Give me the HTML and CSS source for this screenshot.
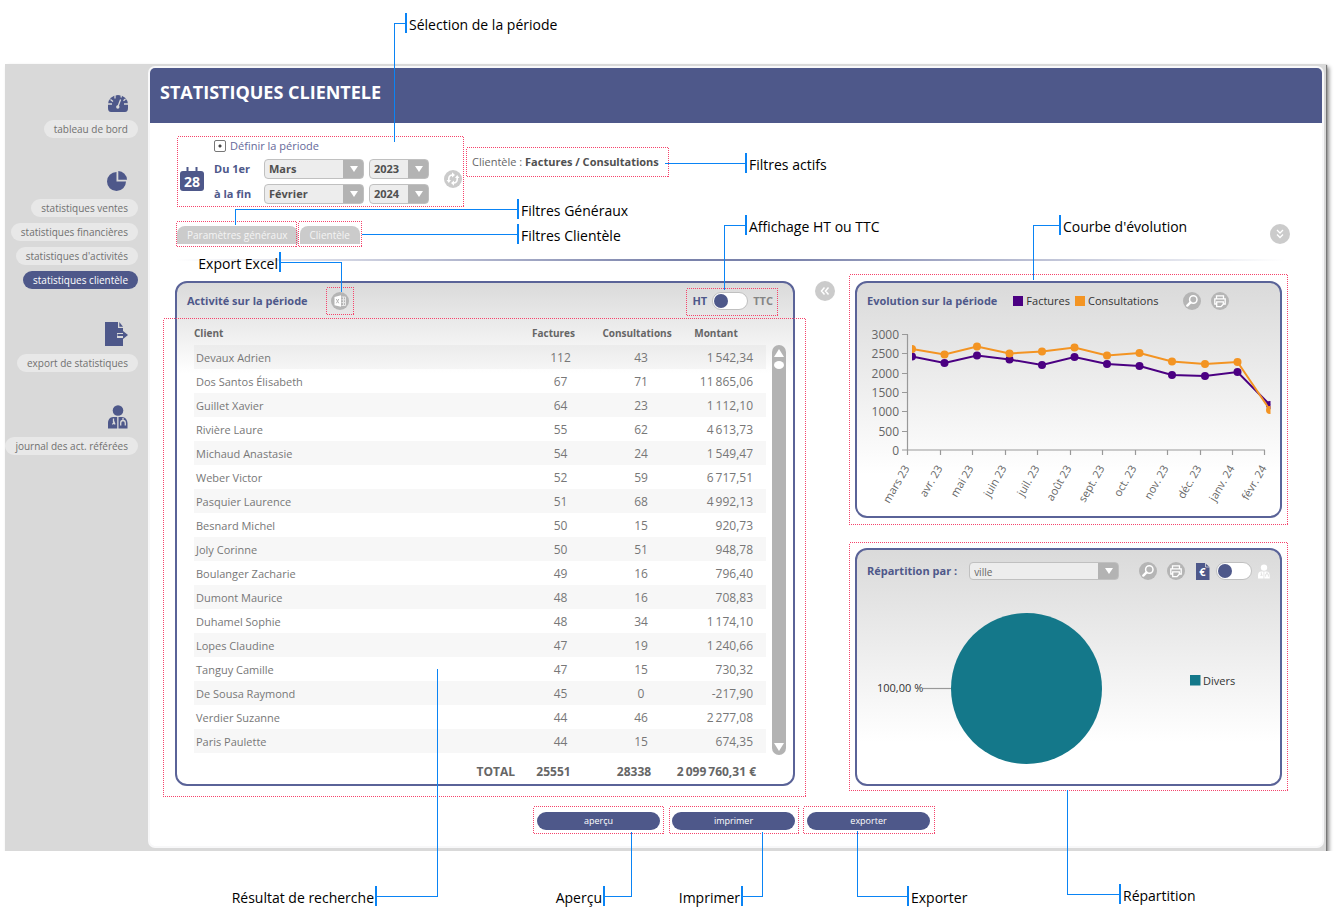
FILE: index.html
```html
<!DOCTYPE html>
<html lang="fr">
<head>
<meta charset="utf-8">
<title>Statistiques clientèle</title>
<link rel="stylesheet" href="styles.css">
</head>
<body>
<svg class="sprite" aria-hidden="true">
  <symbol id="i-zoom" viewBox="0 0 18 18"><circle cx="9" cy="9" r="9" fill="#b5b5b5"/><circle cx="10.300" cy="7.500" r="3.700" fill="none" stroke="#fff" stroke-width="1.500"/><path d="M7.500 10.400 4.300 13.600" stroke="#fff" stroke-width="2.400" stroke-linecap="round"/></symbol>
  <symbol id="i-print" viewBox="0 0 18 18"><circle cx="9" cy="9" r="9" fill="#b5b5b5"/><path d="M5.500 6.500V3.800h7v2.700M5.500 12H3.800V6.900h10.400V12h-1.700" fill="none" stroke="#fff" stroke-width="1.300"/><path d="M5.700 9.800h6.600v2.400l-2.300 2.400H5.700z" fill="#b5b5b5" stroke="#fff" stroke-width="1.300"/></symbol>
  <symbol id="i-doctor" viewBox="0 0 20 24"><circle cx="10" cy="5.500" r="5.300"/><path d="M0 23.500v-5c0-4 2-6.300 5-6.500h4.200v11.500zM10.500 23.500V12H14c3 .2 5.500 2.500 5.500 6.500v5z"/><path class="cut" d="M5.500 13.500v3.500m-1 2.500 1.500-2.500 1 2.500M12.700 20.500v-2.500a2.300 2.500 0 0 1 4.600 0v2.500M15 15.500V13" fill="none" stroke-width="1.300"/></symbol>
</svg>

<div class="frame">
  <nav class="sidebar" aria-label="Navigation">
    <div class="nav-group">
      <svg class="nav-icon" width="20" height="17" viewBox="0 0 20 17"><path d="M0 9.500A10 9.500 0 0 1 20 9.500V13q0 4-3 4H3q-3 0-3-4z" fill="#4e588a"/><path d="M9.800 12 12.600 4.500M7 0v3.500M13.200 0v2.500M0 9h4M16 9h4M2.500 4.500l2.500 2M17.500 4l-2 1.800" stroke="#d9d9d9" stroke-width="1.300"/><circle cx="9.800" cy="12" r="1.700" fill="#d9d9d9"/></svg>
      <a class="pill" href="#">tableau de bord</a>
    </div>
    <div class="nav-group">
      <svg class="nav-icon" width="21" height="20" viewBox="0 0 21 20"><path d="M9.500 1v9.500H19A9.500 9.500 0 1 1 9.500 1z" fill="#4e588a"/><path d="M11.300 0a9 9 0 0 1 8.700 8.800h-8.700z" fill="#4e588a"/></svg>
      <a class="pill" href="#">statistiques ventes</a>
      <a class="pill" href="#">statistiques financières</a>
      <a class="pill" href="#">statistiques d'activités</a>
      <a class="pill active" href="#" aria-current="page">statistiques clientèle</a>
    </div>
    <div class="nav-group">
      <svg class="nav-icon" width="24" height="24" viewBox="0 0 24 24"><path d="M1 0h13v6h5v5h-6v5h6v8H1z" fill="#4e588a"/><path d="M15.300 0 19 4.700h-3.700z" fill="#4e588a"/><path d="M13.500 12h5.500V9l5 4-5 4v-3h-5.500z" fill="#4e588a"/></svg>
      <a class="pill" href="#">export de statistiques</a>
    </div>
    <div class="nav-group">
      <svg class="nav-icon blue" width="20" height="24"><use href="#i-doctor"/></svg>
      <a class="pill" href="#">journal des act. référées</a>
    </div>
  </nav>

  <main class="main">
    <header class="title-bar"><h1>STATISTIQUES CLIENTELE</h1></header>

    <section class="filters">
      <svg class="shift" width="24" height="24" viewBox="0 0 24 24"><path d="M3 4h18q3 0 3 3v14q0 3-3 3H3q-3 0-3-3V7q0-3 3-3z" fill="#4e588a"/><path d="M7.500 0v5M16.500 0v5" stroke="#4e588a" stroke-width="2"/><text class="cal-day" x="12" y="20" text-anchor="middle">28</text></svg>
      <div class="period">
        <label class="define"><input type="radio" name="periode" checked>Définir la période</label>
        <label class="lbl" for="m1">Du 1er</label>
        <span class="select"><select id="m1"><option>Mars</option></select></span>
        <span class="select"><select aria-label="Année de début"><option>2023</option></select></span>
        <label class="lbl" for="m2">à la fin</label>
        <span class="select"><select id="m2"><option>Février</option></select></span>
        <span class="select"><select aria-label="Année de fin"><option>2024</option></select></span>
      </div>
      <button class="icon-btn refresh shift" aria-label="Actualiser"><svg width="18" height="18" viewBox="0 0 18 18"><circle cx="9" cy="9" r="9" fill="#cbcbcb"/><path d="M4.800 11V8.500Q5 5.200 8.500 5M13.200 7v2.500q-.2 3.300-3.700 3.500" fill="none" stroke="#fff" stroke-width="1.600"/><path d="M8 2.300 11 5 8 7.500zM10 10.500 7 13l3 2.700zM2.600 10h4.400l-2.200 3zM11 8h4.400l-2.200-3z" fill="#fff"/></svg></button>
      <p class="active-filter">Clientèle : <strong>Factures / Consultations</strong></p>
    </section>

    <div class="tabs">
      <button class="tab">Paramètres généraux</button>
      <button class="tab">Clientèle</button>
      <button class="icon-btn expand" aria-label="Déplier"><svg width="20" height="20" viewBox="0 0 20 20"><circle cx="10" cy="10" r="10" fill="#cbcbcb"/><path d="M7 6l3 3 3-3M7 10.500l3 3 3-3" fill="none" stroke="#fff" stroke-width="1.300"/></svg></button>
    </div>
    <hr class="divider">

    <div class="panels">
      <section class="panel activity">
        <div class="panel-head">
          <h2>Activité sur la période</h2>
          <button class="icon-btn excel" aria-label="Export Excel"><svg width="18" height="18" viewBox="0 0 18 18"><circle cx="9" cy="9" r="9" fill="#b5b5b5"/><path d="M3.500 5 10 3.300v11.500L3.500 13.300z" fill="#fff"/><path d="M10.500 5h4v8.500h-4M10.500 7.800h4M10.500 10.600h4M12.500 5v8.500" fill="none" stroke="#e8e8e8" stroke-width="1"/><path d="M5.300 7l2.500 4.300M7.800 7l-2.500 4.300" stroke="#b5b5b5"/></svg></button>
          <label class="ht">HT <input class="switch" type="checkbox"> <span>TTC</span></label>
        </div>
        <div class="table-area">
          <table>
            <colgroup><col><col class="c-fac"><col class="c-con"><col class="c-mon"></colgroup>
            <thead><tr><th>Client</th><th>Factures</th><th>Consultations</th><th>Montant</th></tr></thead>
            <tbody>
              <tr><td>Devaux Adrien</td><td>112</td><td>43</td><td>1&#8201;542,34</td></tr>
              <tr><td>Dos Santos Élisabeth</td><td>67</td><td>71</td><td>11&#8201;865,06</td></tr>
              <tr><td>Guillet Xavier</td><td>64</td><td>23</td><td>1&#8201;112,10</td></tr>
              <tr><td>Rivière Laure</td><td>55</td><td>62</td><td>4&#8201;613,73</td></tr>
              <tr><td>Michaud Anastasie</td><td>54</td><td>24</td><td>1&#8201;549,47</td></tr>
              <tr><td>Weber Victor</td><td>52</td><td>59</td><td>6&#8201;717,51</td></tr>
              <tr><td>Pasquier Laurence</td><td>51</td><td>68</td><td>4&#8201;992,13</td></tr>
              <tr><td>Besnard Michel</td><td>50</td><td>15</td><td>920,73</td></tr>
              <tr><td>Joly Corinne</td><td>50</td><td>51</td><td>948,78</td></tr>
              <tr><td>Boulanger Zacharie</td><td>49</td><td>16</td><td>796,40</td></tr>
              <tr><td>Dumont Maurice</td><td>48</td><td>16</td><td>708,83</td></tr>
              <tr><td>Duhamel Sophie</td><td>48</td><td>34</td><td>1&#8201;174,10</td></tr>
              <tr><td>Lopes Claudine</td><td>47</td><td>19</td><td>1&#8201;240,66</td></tr>
              <tr><td>Tanguy Camille</td><td>47</td><td>15</td><td>730,32</td></tr>
              <tr><td>De Sousa Raymond</td><td>45</td><td>0</td><td>-217,90</td></tr>
              <tr><td>Verdier Suzanne</td><td>44</td><td>46</td><td>2&#8201;277,08</td></tr>
              <tr><td>Paris Paulette</td><td>44</td><td>15</td><td>674,35</td></tr>
            </tbody>
            <tfoot><tr><th>TOTAL</th><td>25551</td><td>28338</td><td>2&#8201;099&#8201;760,31 €</td></tr></tfoot>
          </table>
          <div class="scrollbar" aria-hidden="true"><span class="up"></span><span class="thumb"></span><span class="down"></span></div>
        </div>
      </section>

      <button class="icon-btn collapse" aria-label="Replier"><svg width="20" height="20" viewBox="0 0 20 20"><circle cx="10" cy="10" r="10" fill="#cbcbcb"/><path d="M9.500 6.500 6.500 10l3 3.500M13.500 6.500l-3 3.500 3 3.500" fill="none" stroke="#fff" stroke-width="1.500"/></svg></button>

      <div class="side-panels">
        <section class="panel">
          <div class="panel-head">
            <h2>Evolution sur la période</h2>
            <ul class="legend"><li class="k-fac">Factures</li><li class="k-con">Consultations</li></ul>
            <button class="icon-btn" aria-label="Agrandir"><svg width="18" height="18"><use href="#i-zoom"/></svg></button>
            <button class="icon-btn print" aria-label="Imprimer"><svg width="18" height="18"><use href="#i-print"/></svg></button>
          </div>
          <svg class="chart" viewBox="857 320 423 196" role="img" aria-label="Courbe d'évolution">
            <clipPath id="plot"><path d="M912 330H1270.500V450H912z"/></clipPath>
            <path d="M907.500 334.500V450M902 334.500h6M902 353.500h6M902 373.500h6M902 392.500h6M902 411.500h6M902 431.500h6M902 450H1265M907.500 450v5M940.500 450v5M972.500 450v5M1005.500 450v5M1037.500 450v5M1070.500 450v5M1102.500 450v5M1135.500 450v5M1167.500 450v5M1200.500 450v5M1232.500 450v5M1264.500 450v5" fill="none" stroke="#999" stroke-width="1.200"/>
            <g class="axis" text-anchor="end">
              <text x="899" y="339">3000</text><text x="899" y="358">2500</text><text x="899" y="378">2000</text><text x="899" y="397">1500</text><text x="899" y="416">1000</text><text x="899" y="436">500</text><text x="899" y="455">0</text>
            </g>
            <g class="axis months" text-anchor="end">
              <text transform="translate(910 468) rotate(-60)">mars 23</text><text transform="translate(943 468) rotate(-60)">avr. 23</text><text transform="translate(974 468) rotate(-60)">mai 23</text><text transform="translate(1007 468) rotate(-60)">juin 23</text><text transform="translate(1040 468) rotate(-60)">juil. 23</text><text transform="translate(1072 468) rotate(-60)">août 23</text><text transform="translate(1105 468) rotate(-60)">sept. 23</text><text transform="translate(1137 468) rotate(-60)">oct. 23</text><text transform="translate(1169 468) rotate(-60)">nov. 23</text><text transform="translate(1202 468) rotate(-60)">déc. 23</text><text transform="translate(1235 468) rotate(-60)">janv. 24</text><text transform="translate(1267 468) rotate(-60)">févr. 24</text>
            </g>
            <g clip-path="url(#plot)">
              <polyline points="912,356.500 944.500,363 977,355.500 1009.500,359.500 1042,365 1074.500,357 1107,364 1139.500,366 1172,375 1205,376 1237.500,372 1270,405" fill="none" stroke="#4b0082" stroke-width="2"/>
              <g fill="#4b0082"><circle cx="912" cy="356.500" r="4"/><circle cx="944.500" cy="363" r="4"/><circle cx="977" cy="355.500" r="4"/><circle cx="1009.500" cy="359.500" r="4"/><circle cx="1042" cy="365" r="4"/><circle cx="1074.500" cy="357" r="4"/><circle cx="1107" cy="364" r="4"/><circle cx="1139.500" cy="366" r="4"/><circle cx="1172" cy="375" r="4"/><circle cx="1205" cy="376" r="4"/><circle cx="1237.500" cy="372" r="4"/><circle cx="1270" cy="405" r="4"/></g>
              <polyline points="912,349 944.500,354.500 977,346.500 1009.500,353.500 1042,351.500 1074.500,347.500 1107,355.500 1139.500,353 1172,361.500 1205,364 1237.500,362 1270,410" fill="none" stroke="#f39423" stroke-width="2"/>
              <g fill="#f39423"><circle cx="912" cy="349" r="4"/><circle cx="944.500" cy="354.500" r="4"/><circle cx="977" cy="346.500" r="4"/><circle cx="1009.500" cy="353.500" r="4"/><circle cx="1042" cy="351.500" r="4"/><circle cx="1074.500" cy="347.500" r="4"/><circle cx="1107" cy="355.500" r="4"/><circle cx="1139.500" cy="353" r="4"/><circle cx="1172" cy="361.500" r="4"/><circle cx="1205" cy="364" r="4"/><circle cx="1237.500" cy="362" r="4"/><circle cx="1270" cy="410" r="4"/></g>
            </g>
          </svg>
        </section>

        <section class="panel">
          <div class="panel-head tall">
            <label class="h2" for="rep">Répartition par :</label>
            <span class="select city"><select id="rep"><option>ville</option></select></span>
            <button class="icon-btn" aria-label="Agrandir"><svg width="18" height="18"><use href="#i-zoom"/></svg></button>
            <button class="icon-btn" aria-label="Imprimer"><svg width="18" height="18"><use href="#i-print"/></svg></button>
            <div class="mode">
              <svg width="14" height="17" viewBox="0 0 14 17"><path d="M0 0h9l4.500 4v13H0z" fill="#4e588a"/><path d="M9.500 0v4H14" fill="none" stroke="#dedede" stroke-width=".8"/><text class="euro" x="6.500" y="13" text-anchor="middle">€</text></svg>
              <input class="switch" type="checkbox" aria-label="Montant ou clients">
              <svg class="white" width="12" height="15"><use href="#i-doctor"/></svg>
            </div>
          </div>
          <svg class="chart" viewBox="857 592 423 192" role="img" aria-label="Répartition par ville">
            <path d="M923 688.500h29" stroke="#999" stroke-width="1.200"/>
            <circle cx="1026.500" cy="688.500" r="75.500" fill="#14788a"/>
            <text class="pie-label" x="877" y="692">100,00 %</text>
            <path d="M1190 675h10.500v10.500H1190z" fill="#14788a"/>
            <text class="pie-label" x="1203" y="685">Divers</text>
          </svg>
        </section>
      </div>
    </div>

    <div class="actions">
      <button class="action">aperçu</button>
      <button class="action">imprimer</button>
      <button class="action">exporter</button>
    </div>
  </main>
</div>

<svg class="callouts" width="1335" height="924" viewBox="0 0 1335 924">
  <g class="zones">
    <rect x="177.500" y="136.500" width="286" height="70"/><rect x="466.500" y="147.500" width="202" height="29"/>
    <rect x="176.500" y="221.500" width="120" height="25"/><rect x="298.500" y="221.500" width="63" height="25"/>
    <rect x="326.500" y="287.500" width="27" height="27"/><rect x="686.500" y="288.500" width="91" height="27"/>
    <rect x="163.500" y="318.500" width="642" height="478"/><rect x="849.500" y="274.500" width="438" height="250"/><rect x="849.500" y="542.500" width="438" height="248"/>
    <rect x="533.500" y="806.500" width="130" height="27"/><rect x="669.500" y="806.500" width="129" height="27"/><rect x="803.500" y="806.500" width="131" height="27"/>
  </g>
  <g class="leaders">
    <path d="M405 23.500H394.500V142"/><path d="M665 163.500H745"/><path d="M517 209.500H235.500V225"/><path d="M362 234.500H517"/><path d="M745 225.500H724.500V290"/><path d="M281 262.500H341.500V292"/><path d="M1059 225.500H1033.500V280"/>
    <path d="M377 896.500H437.500V669"/><path d="M605 896.500H631.500V832"/><path d="M743 896.500H762.500V832"/><path d="M907 896.500H857.500V831"/><path d="M1119 894.500H1067.500V790"/>
  </g>
  <path class="bars" d="M406 13v20M746 153v20M518 199v20M518 224v20M746 215v20M280 252v20M1060 215v20M376 886v20M604 886v20M742 886v20M908 886v20M1120 884v20"/>
  <g class="notes">
    <text x="409" y="30">Sélection de la période</text><text x="749" y="170">Filtres actifs</text><text x="521" y="216">Filtres Généraux</text><text x="521" y="241">Filtres Clientèle</text><text x="749" y="232">Affichage HT ou TTC</text><text x="1063" y="232">Courbe d'évolution</text><text x="911" y="903">Exporter</text><text x="1123" y="901">Répartition</text>
    <g text-anchor="end"><text x="278" y="269">Export Excel</text><text x="374" y="903">Résultat de recherche</text><text x="602" y="903">Aperçu</text><text x="740" y="903">Imprimer</text></g>
  </g>
</svg>
</body>
</html>
```
FILE: styles.css
```css
:root {
  --blue: #4e588a;
  --grey: #d9d9d9;
}
* { box-sizing: border-box; }
body {
  margin: 0;
  background: #fff;
  color: #666;
  font: 12px/18px "Open Sans", "Noto Sans", sans-serif;
}
button, select, input { font: inherit; color: inherit; margin: 0; }
button { border: 0; padding: 0; background: none; cursor: pointer; }
svg { display: block; flex: none; }
h1, h2, p, ul { margin: 0; padding: 0; }
.sprite { position: absolute; width: 0; height: 0; }

.frame {
  display: flex;
  margin: 64px 9px 0 5px;
  padding: 2px 2px 3px 0;
  background: var(--grey);
  box-shadow: 1px 1px 1px #777, 3px 3px 4px #888;
}

/* Sidebar */
.sidebar {
  display: flex;
  flex-direction: column;
  gap: 33px;
  width: 143px;
  flex: none;
  padding: 29px 10px 0 0;
}
.nav-group { display: flex; flex-direction: column; align-items: flex-end; gap: 6px; }
.nav-icon { margin: 0 10px 2px 0; }
.blue { fill: var(--blue); }
.cut { stroke: var(--grey); }
.white { fill: #fff; }
.pill {
  height: 18px;
  padding: 0 10px;
  border-radius: 9px;
  background: #e8e8e8;
  color: #707070;
  font-size: 10px;
  line-height: 18px;
  text-decoration: none;
  white-space: nowrap;
}
.pill.active { background: var(--blue); color: #fff; }

/* Main area */
.main {
  flex: 1;
  min-width: 0;
  padding-bottom: 16px;
  border: 2px solid #f8f8f9;
  border-radius: 7px;
  background: #fff;
}
.title-bar {
  height: 55px;
  padding: 0 10px;
  border-radius: 5px 5px 0 0;
  background: var(--blue);
}
.title-bar h1 { color: #fff; font-size: 18px; font-weight: 700; line-height: 48px; }

.filters { display: flex; align-items: center; padding: 15px 30px 0; }
.shift { margin-top: 16px; }
.period {
  display: grid;
  grid-template-columns: 45px 100px 60px;
  grid-template-rows: 16px 20px 20px;
  gap: 5px;
  align-items: center;
  margin-left: 10px;
}
.define { grid-column: 1 / -1; display: flex; align-items: center; gap: 4px; color: #65699a; font-size: 11px; }
.define input {
  appearance: none;
  width: 12px;
  height: 12px;
  border: 1px solid #777;
  border-radius: 2px;
  background: radial-gradient(circle, #444 1px, #fff 2px);
}
.lbl { color: var(--blue); font-size: 11px; font-weight: 700; white-space: nowrap; }
.select { position: relative; display: block; height: 20px; }
.select select {
  appearance: none;
  display: block;
  width: 100%;
  height: 100%;
  padding: 0 4px;
  border: 1px solid #c0c0c0;
  border-radius: 4px;
  background: linear-gradient(to left, #b3b3b3 20px, #ededed 20px);
  color: #505050;
  font-size: 11px;
  font-weight: 700;
}
.select::after {
  content: "";
  position: absolute;
  right: 6px;
  top: 7px;
  border: 4px solid transparent;
  border-top: 6px solid #fff;
  border-bottom: 0;
  pointer-events: none;
}
.icon-btn { flex: none; }
.refresh { margin-left: 15px; }
.active-filter { margin: 0 0 18px 10px; font-size: 11px; white-space: nowrap; }
.active-filter strong { color: #505050; }

.tabs { display: flex; align-items: flex-end; gap: 2px; padding: 20px 32px 0 27px; }
.tab {
  height: 18px;
  padding: 0 10px;
  border-radius: 8px 8px 0 0;
  background: #cbcbcb;
  color: #f4f4f4;
  font-size: 10px;
  line-height: 18px;
}
.expand { margin-left: auto; }
.divider {
  height: 2px;
  margin: 15px 37px 20px 25px;
  border: 0;
  background: linear-gradient(to right, transparent, #7a82ab 45%, #7a82ab 55%, transparent);
}

/* Panels */
.panels { display: grid; grid-template-columns: 620fr 60px 427fr; padding: 0 40px 0 25px; }
.side-panels { display: flex; flex-direction: column; justify-content: space-between; gap: 20px; }
.panel {
  border: 2px solid #5a6398;
  border-radius: 12px;
  background: linear-gradient(#dadada, #fff 82%);
}
.activity { background: linear-gradient(#dadada, #fff 90px); }
.panel-head { display: flex; align-items: center; height: 37px; padding: 0 10px 2px; }
.panel-head.tall { height: 42px; padding-bottom: 0; }
.panel-head h2, .h2 { color: var(--blue); font-size: 11px; font-weight: 700; white-space: nowrap; }
.excel { margin-left: 23px; }
.collapse { align-self: start; justify-self: center; }
.ht { display: flex; align-items: center; gap: 5px; margin: 0 10px 0 auto; color: var(--blue); font-size: 11px; font-weight: 700; }
.ht span { color: #858585; }
.switch {
  appearance: none;
  display: flex;
  align-items: center;
  width: 36px;
  height: 18px;
  padding: 0 1px;
  border: 1px solid #c0c0c0;
  border-radius: 9px;
  background: #fff;
}
.switch::before { content: ""; width: 14px; height: 14px; border-radius: 50%; background: var(--blue); }
.switch:checked { justify-content: flex-end; }

.table-area { display: flex; gap: 6px; padding: 0 7px 0 17px; }
table { flex: 1; border-collapse: collapse; table-layout: fixed; width: 100%; }
.c-fac { width: 87px; }
.c-con { width: 74px; }
.c-mon { width: 90px; }
th, td { padding: 0; text-align: center; white-space: nowrap; }
thead th { height: 25px; padding-right: 10px; font-size: 10px; font-weight: 700; }
thead th:nth-child(3) { padding-right: 4px; }
thead th:first-child { text-align: left; }
tbody td { height: 24px; padding: 2px 0 0 4px; color: #777; }
tbody td:first-child { padding-left: 2px; font-size: 11px; text-align: left; }
tbody td:last-child { padding-right: 13px; text-align: right; }
tbody tr:nth-child(odd) { background: rgba(0, 0, 0, .03); }
tfoot th, tfoot td { height: 31px; padding: 6px 10px 0 0; font-weight: 700; }
tfoot th { padding-right: 0; text-align: right; }
tfoot td:last-child { text-align: right; }
.scrollbar {
  display: flex;
  flex-direction: column;
  align-items: center;
  gap: 4px;
  width: 14px;
  margin: 25px 0 29px;
  padding: 4px 0;
  border-radius: 7px;
  background: #b3b3b3;
}
.up, .down { border: 5px solid transparent; }
.up { border-top: 0; border-bottom: 8px solid #fff; }
.down { margin-top: auto; border-bottom: 0; border-top: 8px solid #fff; }
.thumb { width: 10px; height: 8px; border-radius: 50%; background: #fff; }

.legend { display: flex; gap: 5px; margin: 0 25px 0 16px; list-style: none; color: #333; font-size: 11px; }
.legend li { display: flex; align-items: center; gap: 3px; white-space: nowrap; }
.legend li::before { content: ""; width: 10px; height: 10px; background: #4b0082; }
.legend .k-con::before { background: #f39423; }
.icon-btn + .icon-btn { margin-left: 10px; }
.chart { width: 100%; height: auto; }
.axis { fill: #666; font-size: 12px; }
.months { font-size: 11px; }
.pie-label { fill: #333; font-size: 11px; }
.city { flex: 0 1 150px; height: 18px; margin: 0 20px 0 12px; }
.city select { color: #666; font-size: 10px; font-weight: 400; }
.city::after { top: 6px; }
.mode { display: flex; align-items: center; gap: 6px; margin-left: auto; }
.white .cut { stroke: #ddd; }
.cal-day { fill: #fff; font-size: 14px; font-weight: 700; }
.euro { fill: #fff; font-size: 11px; font-weight: 700; }

.actions { display: flex; justify-content: center; gap: 12px; padding: 26px 5px 0 0; }
.action {
  width: 123px;
  height: 18px;
  border-radius: 9px;
  background: var(--blue);
  color: #fff;
  font-size: 9px;
  line-height: 18px;
}

/* Annotation layer over the window */
.callouts { position: absolute; top: 0; left: 0; pointer-events: none; }
.zones { fill: none; stroke: #f5446c; stroke-dasharray: 1 1; shape-rendering: crispEdges; }
.leaders { fill: none; stroke: #0a84f5; shape-rendering: crispEdges; }
.bars { fill: none; stroke: #0a84f5; stroke-width: 2; }
.notes { fill: #000; font-size: 14px; }
```
